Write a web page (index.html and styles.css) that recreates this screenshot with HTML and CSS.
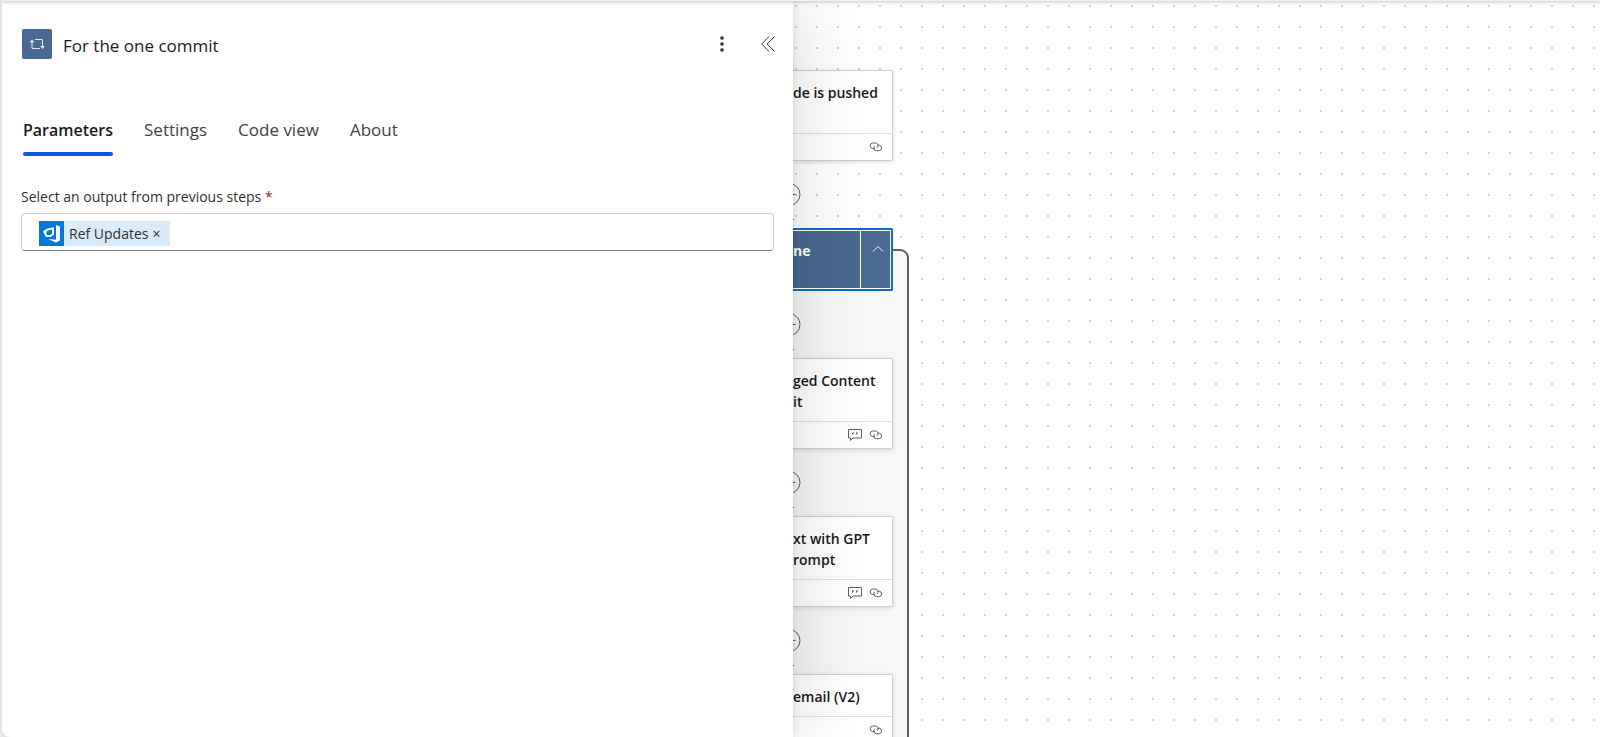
FILE: index.html
```html
<!DOCTYPE html>
<html lang="en">
  <head>
    <meta charset="UTF-8" />
    <meta name="viewport" content="width=device-width, initial-scale=1.0" />
    <title>For the one commit</title>
    <link rel="stylesheet" href="styles.css" />
  </head>
  <body>
    <!-- shared icons -->
    <svg class="sprite" aria-hidden="true">
      <symbol id="icon-link" viewBox="0 0 14 10">
        <path d="M6 6.500H3.500a2.800 2.800 0 0 1 0-5.500h2.700a2.700 2.700 0 0 1 1.800 4.800M8.500 3.200h1.800a2.800 2.800 0 0 1 0 5.500H7.500a2.700 2.700 0 0 1-1.800-4.800" />
      </symbol>
      <symbol id="icon-comment" viewBox="0 0 14 13">
        <path d="M.5.5h13v8.500H5L2.500 11.500V9h-2z" />
        <path d="M4.500 3.500v2M5.500 3.500v1M8.500 3.500v2M9.500 3.500v1" />
      </symbol>
      <symbol id="icon-add" viewBox="0 0 10 67">
        <circle cx="-4" cy="33.500" r="11" />
        <path class="plus" d="M-9 33.500H2.500" />
        <path d="M-8 58l4.500 4.500L1 58" />
      </symbol>
    </svg>

    <div class="topbar"></div>

    <main class="designer">
      <section class="panel">
        <header class="panel-header">
          <svg class="panel-icon" viewBox="0 0 30 30" aria-hidden="true">
            <path d="M10 13v6.500h8M13 10.500h7.500V18" />
            <path class="tip" d="M7.500 13.500L10 10.500l2.500 3zM18 17l2.500 3 2.500-3z" />
          </svg>
          <h1>For the one commit</h1>
          <button type="button" class="icon-button" aria-label="More commands">
            <svg class="more" viewBox="0 0 4 18">
              <circle cx="2" cy="3" r="1.800" />
              <circle cx="2" cy="9" r="1.800" />
              <circle cx="2" cy="15" r="1.800" />
            </svg>
          </button>
          <button type="button" class="icon-button" aria-label="Collapse">
            <svg class="collapse" viewBox="0 0 14 16">
              <path d="M8 .5L.7 8 8 15.500M13.500.5L6.200 8l7.300 7.500" />
            </svg>
          </button>
        </header>

        <nav class="tabs">
          <button type="button" class="tab active">Parameters</button>
          <button type="button" class="tab">Settings</button>
          <button type="button" class="tab">Code view</button>
          <button type="button" class="tab">About</button>
        </nav>

        <div class="field">
          <label for="output">Select an output from previous steps <span class="required">*</span></label>
          <div class="token-box">
            <span class="token">
              <svg class="token-icon" viewBox="0 0 25 25" aria-hidden="true">
                <path class="shape" d="M17 4l4 1.500v14L17 21.500l-8-3.500 8 .8z" />
                <path d="M10.500 8L7.500 9l-1.500 3.500 1.500 2.500h4l2.500-2V7.500L10.500 8" />
                <path d="M6.500 9.500l-2 2" />
              </svg>
              Ref Updates
              <button type="button" class="token-remove" aria-label="Remove">×</button>
            </span>
            <input type="text" id="output" />
          </div>
        </div>
      </section>

      <section class="canvas">
        <article class="card">
          <h2>de is pushed</h2>
          <footer>
            <svg class="link"><use href="#icon-link" /></svg>
          </footer>
        </article>
        <svg class="connector"><use href="#icon-add" /></svg>

        <div class="loop">
          <article class="scope">
            <h2>ne</h2>
            <button type="button" aria-label="Collapse scope">
              <svg viewBox="0 0 12 8"><path d="M1 6.500l5-5 5 5" /></svg>
            </button>
          </article>
          <svg class="connector"><use href="#icon-add" /></svg>

          <article class="card">
            <h2>ged Content<br />it</h2>
            <footer>
              <svg class="comment"><use href="#icon-comment" /></svg>
              <svg class="link"><use href="#icon-link" /></svg>
            </footer>
          </article>
          <svg class="connector"><use href="#icon-add" /></svg>

          <article class="card">
            <h2>xt with GPT<br />rompt</h2>
            <footer>
              <svg class="comment"><use href="#icon-comment" /></svg>
              <svg class="link"><use href="#icon-link" /></svg>
            </footer>
          </article>
          <svg class="connector"><use href="#icon-add" /></svg>

          <article class="card short">
            <h2>email (V2)</h2>
            <footer>
              <svg class="link"><use href="#icon-link" /></svg>
            </footer>
          </article>
        </div>
      </section>
    </main>
  </body>
</html>
```

FILE: styles.css
```css
* {
  margin: 0;
  padding: 0;
  box-sizing: border-box;
}

body {
  display: flex;
  flex-direction: column;
  height: 100vh;
  padding-left: 2px;
  overflow: hidden;
  background: #f0f0f0;
  color: #1b1a19;
  font-family: "Segoe UI", "Open Sans", "Noto Sans", sans-serif;
}

button {
  border: none;
  background: none;
  color: inherit;
  font: inherit;
  cursor: pointer;
}

svg {
  display: block;
  flex: none;
  fill: none;
  stroke: #605e5c;
}

.sprite {
  position: absolute;
  width: 0;
  height: 0;
}

.topbar {
  flex: none;
  height: 1px;
  background: #f3f3f3;
  box-shadow: 0 1px 3px rgba(0, 0, 0, 0.45);
  z-index: 3;
}

.designer {
  display: grid;
  grid-template-columns: 49.5% 1fr;
  flex: 1;
  min-height: 0;
}

/* details panel */
.panel {
  z-index: 2;
  padding: 28px 19px 0;
  border-bottom-left-radius: 8px;
  background: #fff;
  box-shadow: 0 0 6px rgba(0, 0, 0, 0.1), 20px 0 60px rgba(0, 0, 0, 0.1);
}

.panel-header {
  display: flex;
  align-items: center;
  height: 30px;
  padding-left: 1px;
}

.panel-icon {
  width: 30px;
  height: 30px;
  margin-right: 11px;
  border-radius: 2px;
  background: #486991;
  stroke: #dfe6ee;
}

.panel-icon .tip {
  fill: #dfe6ee;
  stroke: none;
}

.panel-header h1 {
  flex: 1;
  padding-top: 2px;
  font-size: 17px;
  font-weight: 500;
}

.icon-button {
  display: flex;
  align-items: center;
  justify-content: center;
  width: 30px;
  height: 30px;
  margin-left: 16px;
}

.icon-button:last-child {
  margin-right: -9px;
}

.more {
  width: 4px;
  height: 18px;
  fill: #323130;
  stroke: none;
}

.collapse {
  width: 14px;
  height: 16px;
  stroke: #323130;
}

.tabs {
  display: flex;
  gap: 31px;
  margin-top: 54px;
  padding-left: 2px;
}

.tab {
  position: relative;
  height: 43px;
  padding-bottom: 10px;
  color: #424242;
  font-size: 17px;
}

.tab.active {
  color: #1b1a19;
  font-size: 16px;
  font-weight: 600;
}

.tab.active::after {
  content: "";
  position: absolute;
  left: 0;
  right: 0;
  bottom: 0;
  height: 4px;
  border-radius: 2px;
  background: #0f54e6;
}

.field {
  margin-top: 29px;
}

.field label {
  display: block;
  color: #323130;
  font-size: 14px;
  line-height: 24px;
}

.required {
  color: #a4262c;
}

.token-box {
  display: flex;
  align-items: center;
  height: 38px;
  margin-top: 4px;
  padding: 2px 17px 0;
  border: 1px solid #d1d1d1;
  border-bottom-color: #8a8a8a;
  border-radius: 4px;
}

.token {
  display: flex;
  align-items: center;
  height: 25px;
  padding-right: 9px;
  background: #d9eaf8;
  color: #323130;
  font-size: 14px;
}

.token-icon {
  width: 25px;
  height: 25px;
  margin-right: 5px;
  background: #0078d7;
  stroke: #fff;
  stroke-width: 2;
}

.token-icon .shape {
  fill: #fff;
  stroke: none;
}

.token-remove {
  margin-left: 4px;
}

.token-box input {
  flex: 1;
  min-width: 0;
  border: none;
  outline: none;
  font: inherit;
}

/* workflow canvas */
.canvas {
  padding-top: 69px;
  overflow: hidden;
  background-color: #fff;
  background-image: radial-gradient(circle at 3px 5px, #d2d2d2 1px, transparent 1px);
  background-size: 21px 21px;
}

.card {
  display: flex;
  flex-direction: column;
  width: 100px;
  height: 91px;
  border: 1px solid #d2d0ce;
  border-left: none;
  border-radius: 0 2px 2px 0;
  background: #fff;
  box-shadow: 0 1px 4px rgba(0, 0, 0, 0.15);
}

.card h2 {
  flex: 1;
  padding-top: 11px;
  font-size: 14px;
  font-weight: 600;
  line-height: 21px;
  white-space: nowrap;
}

.card footer {
  display: flex;
  align-items: center;
  justify-content: flex-end;
  gap: 7px;
  height: 27px;
  padding-right: 9px;
  border-top: 1px solid #e1dfdd;
}

.card.short {
  height: 70px;
}

.link {
  width: 14px;
  height: 10px;
}

.comment {
  width: 14px;
  height: 13px;
}

.connector {
  width: 10px;
  height: 67px;
}

.plus {
  stroke: #0078d4;
}

.loop {
  width: 116px;
  height: 600px;
  margin-top: 21px;
  border: 2px solid #605e5c;
  border-left: none;
  border-radius: 0 9px 0 0;
  background: #f8f7f6;
}

.scope {
  display: flex;
  width: 100px;
  height: 63px;
  margin-top: -23px;
  border: 2px solid #0f6cca;
  border-left: none;
  border-radius: 0 2px 2px 0;
  background: #486991;
  box-shadow: inset -1px 1px #fff, inset 0 -1px #fff;
  color: #fff;
}

.scope h2 {
  flex: 1;
  padding-top: 10px;
  font-size: 14px;
  font-weight: 700;
  line-height: 21px;
}

.scope button {
  display: flex;
  justify-content: center;
  width: 31px;
  padding: 15px 0 0 3px;
  border-left: 1px solid #fff;
}

.scope svg {
  width: 12px;
  height: 8px;
  stroke: #fff;
}
```
